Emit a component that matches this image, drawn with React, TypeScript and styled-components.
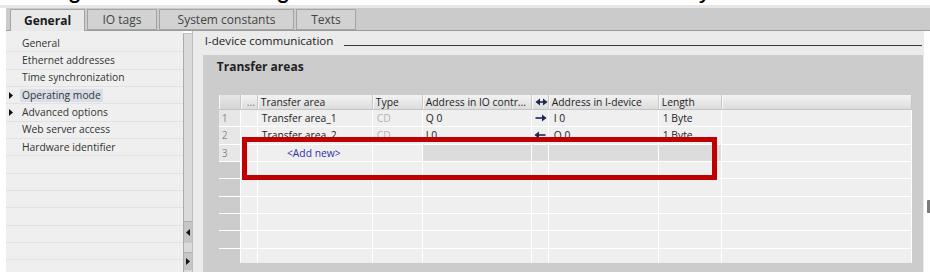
import React from "react";
import styled, { createGlobalStyle } from "styled-components";

const GlobalStyle = createGlobalStyle`
  html, body { margin: 0; padding: 0; background: #ffffff; }
  body { font-family: "Open Sans", "Noto Sans", sans-serif; }
  * { box-sizing: border-box; }
`;

const ROW_H = 17.33;

const Page = styled.div`
  width: 930px;
  height: 276px;
  overflow: hidden;
  background: #ffffff;
  display: flex;
  flex-direction: column;
`;

const CaptionStrip = styled.div`
  height: 5px;
  overflow: hidden;
  padding-left: 8px;
`;

const Caption = styled.div`
  margin-top: -23px;
  font-family: "Liberation Sans", Arial, sans-serif;
  font-size: 25px;
  line-height: 25px;
  color: #000;
  white-space: nowrap;
`;

const TopRule = styled.div`
  height: 3px;
  background: #e6e6e6;
`;

const TabBar = styled.div`
  height: 23px;
  margin-left: 6px;
  background: #cbcbcb;
  border-bottom: 1px solid #9c9c9c;
  display: flex;
  align-items: flex-end;
  gap: 2px;
  padding-left: 4px;
`;

const Tab = styled.div<{ $active?: boolean; $w: number }>`
  width: ${(p) => p.$w}px;
  height: ${(p) => (p.$active ? 22 : 21)}px;
  margin-bottom: ${(p) => (p.$active ? -1 : 0)}px;
  background: ${(p) => (p.$active ? "#e9e9e9" : "#d2d2d2")};
  border: 1px solid #a4a4a4;
  border-bottom: ${(p) => (p.$active ? "none" : "1px solid #a4a4a4")};
  display: flex;
  align-items: center;
  justify-content: center;
  font-size: 12px;
  font-weight: ${(p) => (p.$active ? 700 : 400)};
  color: ${(p) => (p.$active ? "#1a1a1a" : "#444")};
  padding-bottom: 1px;
`;

const Body = styled.div`
  height: 241px;
  display: flex;
  padding-left: 6px;
`;

const NavPanel = styled.div`
  width: 177px;
  background: #efefef;
  padding-top: 4px;
  overflow: hidden;
`;

const NavRow = styled.div`
  height: ${ROW_H}px;
  border-bottom: 1px solid #e2e2e2;
  display: flex;
  align-items: center;
  padding-left: 3px;
  font-size: 10.3px;
  color: #333;
  white-space: nowrap;
`;

const NavArrow = styled.span`
  width: 13px;
  display: flex;
  align-items: center;
`;

const NavLabel = styled.span<{ $selected?: boolean }>`
  margin-left: -2px;
  padding: 0 2px;
  height: 13px;
  line-height: 13px;
  background: ${(p) => (p.$selected ? "#d8dee7" : "transparent")};
`;

const Splitter = styled.div`
  width: 9px;
  margin-top: 2px;
  background: #dadada;
  border-left: 1px solid #ababab;
  border-top: 1px solid #c4c4c4;
  display: flex;
  flex-direction: column;
  justify-content: flex-end;
  gap: 9px;
  padding-bottom: 2px;
`;

const SplitButton = styled.div<{ $h: number }>`
  height: ${(p) => p.$h}px;
  background: #c6c6c6;
  border-top: 1px solid #b0b0b0;
  display: flex;
  align-items: center;
  justify-content: center;
`;

const Content = styled.div`
  width: 733px;
  background: #ebebeb;
  border-left: 1px solid #bdbdbd;
  display: flex;
  flex-direction: column;
  padding-right: 1px;
`;

const SectionHeader = styled.div`
  height: 24px;
  display: flex;
  align-items: flex-start;
  padding-left: 12px;
  padding-right: 1px;
  padding-top: 2px;
  gap: 11px;
`;

const SectionTitle = styled.span`
  font-size: 11.6px;
  line-height: 16px;
  color: #222;
  white-space: nowrap;
`;

const SectionRule = styled.div`
  flex: 1;
  height: 13px;
  border-bottom: 1px solid #3a3a3a;
`;

const GrayBox = styled.div`
  flex: 1;
  margin-left: 10px;
  background: #cccccc;
  padding: 4px 11px 0 16px;
  display: flex;
  flex-direction: column;
`;

const BoxTitle = styled.div`
  height: 36px;
  font-size: 12px;
  font-weight: 700;
  color: #222;
  line-height: 16px;
  margin-left: -2px;
`;

const TableWrap = styled.div`
  position: relative;
  height: 168px;
  overflow: visible;
`;

const TableClip = styled.div`
  height: 168px;
  overflow: hidden;
`;

const COLS = "22px 17px 115px 50px 109px 17px 110px 63px 1fr";

const HeaderRow = styled.div`
  display: grid;
  grid-template-columns: ${COLS};
  height: 15px;
  background: linear-gradient(#f3f3f3, #dcdcdc);
  border-bottom: 1px solid #c4c4c4;
`;

const HeadCell = styled.div<{ $num?: boolean; $center?: boolean }>`
  border-right: 1px solid #c6c6c6;
  box-shadow: inset 1px 0 0 #fafafa;
  background: ${(p) => (p.$num ? "linear-gradient(#e6e6e6, #d4d4d4)" : "transparent")};
  font-size: 10.3px;
  line-height: 14px;
  color: ${(p) => (p.$center ? "#777" : "#222")};
  padding-left: ${(p) => (p.$center ? 6 : 3)}px;
  white-space: nowrap;
  overflow: hidden;
  display: flex;
  align-items: center;
`;

const DataRow = styled.div`
  display: grid;
  grid-template-columns: ${COLS};
  height: ${ROW_H}px;
`;

const Cell = styled.div<{
  $bg?: string;
  $color?: string;
  $pad?: number;
  $center?: boolean;
}>`
  background: ${(p) => p.$bg || "#efefef"};
  border-right: 1px solid #ffffff;
  border-bottom: 1px solid #ffffff;
  font-size: 10.3px;
  color: ${(p) => p.$color || "#222"};
  padding-left: ${(p) => (p.$pad ?? 4)}px;
  display: flex;
  align-items: center;
  justify-content: ${(p) => (p.$center ? "center" : "flex-start")};
  white-space: nowrap;
  overflow: hidden;
`;

const AddNew = styled.span`
  color: #2f2fae;
  padding-right: 2px;
`;

const Highlight = styled.div`
  position: absolute;
  left: 23px;
  top: 42px;
  width: 475px;
  height: 43px;
  border: 5px solid #c00000;
  pointer-events: none;
`;

const RightGutter = styled.div`
  flex: 1;
  background: #ffffff;
  padding-top: 169px;
  padding-left: 3px;
`;

const GutterMark = styled.div`
  width: 3px;
  height: 13px;
  background: #7a7a7a;
  border-radius: 1px 0 0 1px;
`;

const BottomStrip = styled.div`
  flex: 1;
  background: #ffffff;
`;

const Tri = ({ dir }: { dir: "left" | "right" }) => (
  <svg width="4" height="7" viewBox="0 0 4 7">
    {dir === "right" ? (
      <polygon points="0,0 4,3.5 0,7" fill="#111" />
    ) : (
      <polygon points="4,0 0,3.5 4,7" fill="#111" />
    )}
  </svg>
);

const DirArrow = ({ dir }: { dir: "left" | "right" | "both" }) => (
  <svg width="13" height="8" viewBox="0 0 13 8">
    <line x1="1.5" y1="4" x2="11.5" y2="4" stroke="#1c2a52" strokeWidth="1.6" />
    {(dir === "right" || dir === "both") && (
      <polygon points="8,0.5 12.5,4 8,7.5" fill="#1c2a52" />
    )}
    {(dir === "left" || dir === "both") && (
      <polygon points="5,0.5 0.5,4 5,7.5" fill="#1c2a52" />
    )}
  </svg>
);

const navItems = [
  { label: "General" },
  { label: "Ethernet addresses" },
  { label: "Time synchronization" },
  { label: "Operating mode", arrow: true, selected: true },
  { label: "Advanced options", arrow: true },
  { label: "Web server access" },
  { label: "Hardware identifier" },
  ...Array.from({ length: 8 }, () => ({ label: "" })),
];

type Row = {
  n?: string;
  name?: string;
  type?: string;
  io?: string;
  dir?: "left" | "right";
  dev?: string;
  len?: string;
  add?: boolean;
};

const rows: Row[] = [
  { n: "1", name: "Transfer area_1", type: "CD", io: "Q 0", dir: "right", dev: "I 0", len: "1 Byte" },
  { n: "2", name: "Transfer area_2", type: "CD", io: "I 0", dir: "left", dev: "Q 0", len: "1 Byte" },
  { n: "3", add: true },
  ...Array.from({ length: 7 }, () => ({} as Row)),
];

const tabs = [
  { label: "General", w: 75, active: true },
  { label: "IO tags", w: 70 },
  { label: "System constants", w: 135 },
  { label: "Texts", w: 60 },
];

export default function App() {
  return (
    <Page>
      <GlobalStyle />
      <CaptionStrip>
        <Caption>Change the address range direction with a click on the arrow symbol.</Caption>
      </CaptionStrip>
      <TopRule />
      <TabBar>
        {tabs.map((t) => (
          <Tab key={t.label} $w={t.w} $active={t.active}>
            {t.label}
          </Tab>
        ))}
      </TabBar>
      <Body>
        <NavPanel>
          {navItems.map((item, i) => (
            <NavRow key={i}>
              <NavArrow>{item.arrow ? <Tri dir="right" /> : null}</NavArrow>
              {item.label && <NavLabel $selected={item.selected}>{item.label}</NavLabel>}
            </NavRow>
          ))}
        </NavPanel>
        <Splitter>
          <SplitButton $h={22}>
            <Tri dir="left" />
          </SplitButton>
          <SplitButton $h={18}>
            <Tri dir="right" />
          </SplitButton>
        </Splitter>
        <Content>
          <SectionHeader>
            <SectionTitle>I-device communication</SectionTitle>
            <SectionRule />
          </SectionHeader>
          <GrayBox>
            <BoxTitle>Transfer areas</BoxTitle>
            <TableWrap>
              <TableClip>
                <HeaderRow>
                  <HeadCell $num />
                  <HeadCell $center>...</HeadCell>
                  <HeadCell>Transfer area</HeadCell>
                  <HeadCell>Type</HeadCell>
                  <HeadCell>Address in IO contr...</HeadCell>
                  <HeadCell>
                    <DirArrow dir="both" />
                  </HeadCell>
                  <HeadCell>Address in I-device</HeadCell>
                  <HeadCell>Length</HeadCell>
                  <HeadCell />
                </HeaderRow>
                {rows.map((r, i) => {
                  const dark = r.add ? "#dcdcdc" : undefined;
                  return (
                    <DataRow key={i}>
                      <Cell $bg={r.n ? "#e7e7e7" : "#cccccc"} $color="#8a8a8a" $pad={3}>
                        {r.n}
                      </Cell>
                      <Cell />
                      <Cell $center={r.add} $pad={r.add ? 0 : 4}>
                        {r.add ? <AddNew>&lt;Add new&gt;</AddNew> : r.name}
                      </Cell>
                      <Cell $color="#b4b4b4">{r.type}</Cell>
                      <Cell $bg={dark} $pad={3}>
                        {r.io}
                      </Cell>
                      <Cell $bg={dark} $pad={2}>
                        {r.dir ? <DirArrow dir={r.dir} /> : null}
                      </Cell>
                      <Cell $bg={dark} $pad={5}>
                        {r.dev}
                      </Cell>
                      <Cell $bg={dark}>{r.len}</Cell>
                      <Cell />
                    </DataRow>
                  );
                })}
              </TableClip>
              <Highlight />
            </TableWrap>
          </GrayBox>
        </Content>
        <RightGutter>
          <GutterMark />
        </RightGutter>
      </Body>
      <BottomStrip />
    </Page>
  );
}
